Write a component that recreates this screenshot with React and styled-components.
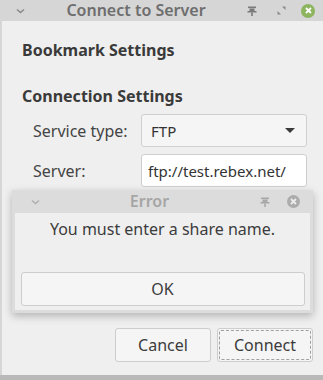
import React from "react";
import styled, { createGlobalStyle } from "styled-components";

const Global = createGlobalStyle`
  html, body { margin: 0; padding: 0; background: #bdbdbd; }
  body { font-family: "Noto Sans", "Open Sans", sans-serif; color: #3c3c3c; }
`;

const Desktop = styled.div`
  position: relative;
  width: 323px;
  height: 380px;
  overflow: hidden;
  background: #b9b9b9;
`;

const Window = styled.div`
  width: 323px;
  height: 375px;
  background: #d6d6d6;
  display: flex;
  flex-direction: column;
  padding: 0 0 0 2px;
  box-sizing: border-box;
`;

const TitleBar = styled.div`
  height: 21px;
  display: flex;
  align-items: center;
  flex: none;
`;

const TitleSide = styled.div`
  width: ${p => p.w}px;
  display: flex;
  align-items: center;
  justify-content: ${p => p.justify || "flex-start"};
  padding: ${p => p.pad || "0"};
  box-sizing: border-box;
  flex: none;
`;

const TitleIcon = styled.div`
  display: flex;
  margin-left: ${p => p.ml || 0}px;
`;

const Title = styled.div`
  flex: 1;
  text-align: center;
  font-size: 16px;
  font-weight: 600;
  color: ${p => p.faded ? "#a6a6a6" : "#6e6e6e"};
  line-height: 21px;
  white-space: nowrap;
`;

const Body = styled.div`
  flex: 1;
  background: #efefef;
  padding: 19px 0 0 20px;
  display: flex;
  flex-direction: column;
`;

const Heading = styled.div`
  font-size: 16px;
  font-weight: 700;
  line-height: 21px;
  color: #3a3a3a;
  margin-bottom: ${p => p.mb}px;
`;

const Form = styled.div`
  display: grid;
  grid-template-columns: 108px 166px;
  row-gap: 7px;
  padding-left: 11px;
  margin-top: 7px;
  align-items: center;
`;

const Label = styled.div`
  font-size: 16px;
  color: #444;
`;

const Select = styled.div`
  height: 33px;
  box-sizing: border-box;
  border: 1px solid #cfcfcf;
  border-radius: 3px;
  background: #f5f5f5;
  display: flex;
  align-items: center;
  justify-content: space-between;
  padding: 0 11px 0 9px;
  font-size: 15px;
  color: #333;
`;

const Input = styled.div`
  height: 33px;
  box-sizing: border-box;
  border: 1px solid #cfcfcf;
  border-radius: 3px;
  background: #ffffff;
  display: flex;
  align-items: center;
  padding: 0 6px;
  font-size: 15px;
  color: #333;
  white-space: nowrap;
  overflow: hidden;
`;

const Arrow = styled.div`
  width: 0;
  height: 0;
  border-left: 5px solid transparent;
  border-right: 5px solid transparent;
  border-top: 5px solid #3a3a3a;
`;

const Actions = styled.div`
  margin-top: auto;
  display: flex;
  justify-content: flex-end;
  gap: 6px;
  padding: 0 10px 13px 0;
`;

const Button = styled.div`
  height: 34px;
  width: ${p => p.w || 96}px;
  box-sizing: border-box;
  border: 1px solid #cdcdcd;
  border-radius: 3px;
  background: #f5f5f5;
  display: flex;
  align-items: center;
  justify-content: center;
  font-size: 16px;
  color: #3c3c3c;
  position: relative;
  ${p => p.focused && `
    &::after {
      content: "";
      position: absolute;
      inset: 1px;
      border: 1px dashed #a0a0a0;
      border-radius: 2px;
    }
  `}
`;

const Dialog = styled.div`
  position: absolute;
  left: 12px;
  top: 190px;
  width: 301px;
  height: 123px;
  background: #dcdcdc;
  box-shadow: 0 3px 8px rgba(0, 0, 0, 0.25);
  display: flex;
  flex-direction: column;
  padding: 0 3px 3px 3px;
  box-sizing: border-box;
`;

const DialogTitle = styled.div`
  height: 23px;
  display: flex;
  align-items: center;
  flex: none;
`;

const DialogBody = styled.div`
  flex: 1;
  background: #efefef;
  display: flex;
  flex-direction: column;
  align-items: center;
  padding: 5px 6px 0 6px;
`;

const Message = styled.div`
  font-size: 16px;
  line-height: 22px;
  color: #3c3c3c;
`;

const OkButton = styled(Button)`
  width: 284px;
  margin-top: auto;
  margin-bottom: 4px;
`;

const Close = styled.div`
  width: ${p => p.size}px;
  height: ${p => p.size}px;
  border-radius: 50%;
  background: ${p => p.color};
  display: flex;
  align-items: center;
  justify-content: center;
`;

const Chevron = ({ color = "#8a8a8a" }) => (
  <svg width="9" height="6" viewBox="0 0 9 6">
    <path d="M1 1.5 L4.5 4.5 L8 1.5" stroke={color} strokeWidth="1.6" fill="none" />
  </svg>
);

const Pin = ({ color = "#7a7a7a" }) => (
  <svg width="10" height="10" viewBox="0 0 10 10">
    <rect x="1" y="0.5" width="8" height="1.6" fill={color} />
    <rect x="2.5" y="2.5" width="5" height="2.5" fill={color} />
    <rect x="0.5" y="5" width="9" height="1.5" fill={color} />
    <rect x="4.2" y="6.5" width="1.6" height="3.5" fill={color} />
  </svg>
);

const Restore = () => (
  <svg width="9" height="9" viewBox="0 0 9 9">
    <path d="M5 0.5 H8.5 V4 Z" fill="#8a8a8a" />
    <path d="M0.5 5 V8.5 H4 Z" fill="#8a8a8a" />
  </svg>
);

const Cross = ({ color = "#fff" }) => (
  <svg width="7" height="7" viewBox="0 0 7 7">
    <path d="M1 1 L6 6 M6 1 L1 6" stroke={color} strokeWidth="1.8" />
  </svg>
);

export default function App() {
  return (
    <Desktop>
      <Global />
      <Window>
        <TitleBar>
          <TitleSide w={32} pad="1px 0 0 14px">
            <Chevron />
          </TitleSide>
          <Title>Connect to Server</Title>
          <TitleSide w={85} justify="flex-end" pad="0 8px 0 0">
            <TitleIcon><Pin /></TitleIcon>
            <TitleIcon ml={20}><Restore /></TitleIcon>
            <TitleIcon ml={15}>
              <Close size={14} color="#8db45f">
                <Cross />
              </Close>
            </TitleIcon>
          </TitleSide>
        </TitleBar>
        <Body>
          <Heading mb={25}>Bookmark Settings</Heading>
          <Heading mb={0}>Connection Settings</Heading>
          <Form>
            <Label>Service type:</Label>
            <Select>
              FTP
              <Arrow />
            </Select>
            <Label>Server:</Label>
            <Input>ftp://test.rebex.net/</Input>
          </Form>
          <Actions>
            <Button w={96}>Cancel</Button>
            <Button w={96} focused>Connect</Button>
          </Actions>
        </Body>
      </Window>
      <Dialog>
        <DialogTitle>
          <TitleSide w={40} pad="0 0 0 16px">
            <Chevron color="#b0b0b0" />
          </TitleSide>
          <Title faded>Error</Title>
          <TitleSide w={66} justify="flex-end" pad="0 10px 0 0">
            <TitleIcon><Pin color="#a8a8a8" /></TitleIcon>
            <TitleIcon ml={17}>
              <Close size={13} color="#acacac">
                <Cross color="#ececec" />
              </Close>
            </TitleIcon>
          </TitleSide>
        </DialogTitle>
        <DialogBody>
          <Message>You must enter a share name.</Message>
          <OkButton>OK</OkButton>
        </DialogBody>
      </Dialog>
    </Desktop>
  );
}
